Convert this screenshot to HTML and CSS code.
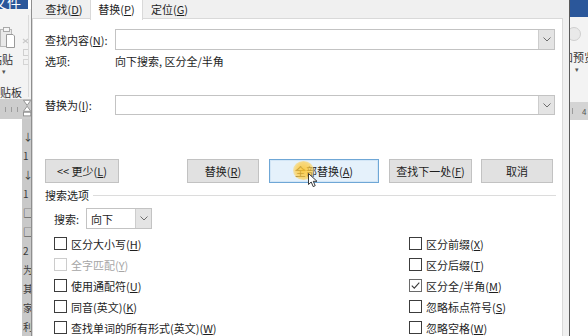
FILE: index.html
```html
<!DOCTYPE html>
<html lang="zh-CN">
<head>
<meta charset="utf-8">
<title>查找和替换</title>
<link rel="stylesheet" href="styles.css">
</head>
<body>
<div class="screen">
  <div class="word-left">
    <div class="wl-title"><span>文件</span></div>
    <div class="wl-ribbon">
      <div class="wl-col">
        <svg class="wl-clip" width="15" height="22" viewBox="0 0 15 22">
          <rect x="0.5" y="3.5" width="11" height="17" fill="#e9e9e9" stroke="#b9b9b9"/>
          <rect x="3.5" y="1.5" width="6" height="4" fill="#f6f6f6" stroke="#a9a9a9"/>
          <path d="M6.5 8.5 H13 L14.5 10 V21.5 H6.5 Z" fill="#fff" stroke="#9a9a9a"/>
        </svg>
        <div class="wl-paste">粘贴</div>
        <div class="wl-caret">▾</div>
        <div class="wl-group">剪贴板</div>
      </div>
      <div class="wl-icons">
        <svg width="7" height="30" viewBox="0 0 7 30">
          <path d="M1 2 L6 6 M6 2 L1 6" stroke="#c9c9c9" stroke-width="1.2"/>
          <rect x="1.5" y="12.5" width="5" height="6" fill="none" stroke="#cfcfcf"/>
          <rect x="1.5" y="22.5" width="5" height="5" fill="none" stroke="#d4d4d4"/>
        </svg>
      </div>
      <div class="wl-sep"></div>
    </div>
    <div class="wl-ruler">
      <span class="tick"></span><span class="tick"></span><span class="tick"></span>
      <svg class="hourglass" width="9" height="20" viewBox="0 0 9 20">
        <path d="M0.5 0.5 H8.5 L4.5 6 Z" fill="#fff" stroke="#8f8f8f"/>
        <path d="M4.5 7 L8.5 12.5 H0.5 Z" fill="#fff" stroke="#8f8f8f"/>
        <rect x="0.5" y="13.5" width="8" height="4" fill="#fff" stroke="#8f8f8f"/>
      </svg>
    </div>
    <div class="wl-doc">
      <div class="wl-page"></div>
      <div class="wl-vstrip">
        <span>↓</span><span>1</span><span>↓</span><span>1</span><span>□</span><span>□</span><span>2</span><span>为</span><span>其</span><span>家</span><span>利</span>
      </div>
    </div>
  </div>

  <div class="dialog">
    <div class="tabs">
      <div class="tab">查找(<u>D</u>)</div>
      <div class="tab active">替换(<u>P</u>)</div>
      <div class="tab">定位(<u>G</u>)</div>
    </div>
    <div class="panel">
      <div class="row find-row">
        <span class="label">查找内容(<u>N</u>):</span>
        <div class="combo wide"><div class="field"></div><div class="drop"><svg width="8" height="5" viewBox="0 0 8 5"><path d="M0.5 0.5 L4 4 L7.5 0.5" fill="none" stroke="#6d6d6d"/></svg></div></div>
      </div>
      <div class="row opt-row">
        <span class="label">选项:</span>
        <span class="value">向下搜索, 区分全/半角</span>
      </div>
      <div class="row repl-row">
        <span class="label">替换为(<u>I</u>):</span>
        <div class="combo wide short"><div class="field"></div><div class="drop"><svg width="8" height="5" viewBox="0 0 8 5"><path d="M0.5 0.5 L4 4 L7.5 0.5" fill="none" stroke="#6d6d6d"/></svg></div></div>
      </div>
      <div class="btn-row">
        <div class="btn b-less">&lt;&lt; 更少(<u>L</u>)</div>
        <div class="btn b-repl">替换(<u>R</u>)</div>
        <div class="btn b-all hot">全部替换(<u>A</u>)
          <span class="halo"></span>
          <svg class="pointer" width="11" height="15" viewBox="0 0 11 15">
            <path d="M0.5 0.5 V11.5 L3.2 9 L5.2 13.6 L7.2 12.7 L5.3 8.3 H9 Z" fill="#fff" stroke="#222" stroke-width="0.9" stroke-linejoin="round"/>
          </svg>
        </div>
        <div class="btn b-next">查找下一处(<u>F</u>)</div>
        <div class="btn b-cancel">取消</div>
      </div>
      <div class="section">
        <span class="sec-title">搜索选项</span>
        <span class="sec-line"></span>
      </div>
      <div class="search-row">
        <span class="s-label">搜索:</span>
        <div class="combo small"><div class="field">向下</div><div class="drop"><svg width="8" height="5" viewBox="0 0 8 5"><path d="M0.5 0.5 L4 4 L7.5 0.5" fill="none" stroke="#6d6d6d"/></svg></div></div>
      </div>
      <div class="checks">
        <div class="chk"><span class="box"></span><span>区分大小写(<u>H</u>)</span></div>
        <div class="chk"><span class="box"></span><span>区分前缀(<u>X</u>)</span></div>
        <div class="chk disabled"><span class="box"></span><span>全字匹配(<u>Y</u>)</span></div>
        <div class="chk"><span class="box"></span><span>区分后缀(<u>T</u>)</span></div>
        <div class="chk"><span class="box"></span><span>使用通配符(<u>U</u>)</span></div>
        <div class="chk"><span class="box checked"><svg width="11" height="11" viewBox="0 0 11 11"><path d="M1.8 5.6 L4.3 8.2 L9.3 2.6" fill="none" stroke="#3a3a3a" stroke-width="1.1"/></svg></span><span>区分全/半角(<u>M</u>)</span></div>
        <div class="chk"><span class="box"></span><span>同音(英文)(<u>K</u>)</span></div>
        <div class="chk"><span class="box"></span><span>忽略标点符号(<u>S</u>)</span></div>
        <div class="chk"><span class="box"></span><span>查找单词的所有形式(英文)(<u>W</u>)</span></div>
        <div class="chk"><span class="box"></span><span>忽略空格(<u>W</u>)</span></div>
      </div>
    </div>
  </div>

  <div class="word-right">
    <div class="wr-title"></div>
    <div class="wr-ribbon">
      <span class="wr-circle"></span>
      <div class="wr-text">和预览</div>
      <div class="wr-caret">▾</div>
    </div>
    <div class="wr-ruler"><span class="tick"></span><span class="num">4</span></div>
    <div class="wr-doc"></div>
  </div>
</div>
</body>
</html>
```

FILE: styles.css
```css
* { box-sizing: border-box; }
html, body { margin: 0; padding: 0; }
body {
  width: 588px;
  height: 336px;
  overflow: hidden;
  background: #ffffff;
  font-family: "Noto Sans CJK SC", "Noto Sans", sans-serif;
  font-size: 11px;
  color: #1e1e1e;
}
u { text-decoration-thickness: 1px; text-underline-offset: 1px; }

.screen { display: flex; width: 588px; height: 336px; }

/* ---------- Word window, left ---------- */
.word-left {
  width: 31px;
  flex: none;
  display: flex;
  flex-direction: column;
  overflow: hidden;
  background: #fff;
}
.wl-title {
  height: 10px;
  width: 28px;
  background: #2b579a;
  overflow: hidden;
}
.wl-title span {
  display: block;
  color: #fff;
  font-size: 14px;
  line-height: 14px;
  margin-top: -5px;
  margin-left: -7px;
  white-space: nowrap;
}
.wl-ribbon {
  height: 90px;
  background: #f3f3f3;
  display: flex;
}
.wl-col {
  width: 22px;
  flex: none;
  display: flex;
  flex-direction: column;
  overflow: hidden;
}
.wl-clip { display: block; margin-top: 17px; margin-left: 0; }
.wl-paste {
  margin-top: 4px;
  margin-left: -9px;
  line-height: 14px;
  white-space: nowrap;
  color: #333;
}
.wl-caret {
  line-height: 10px;
  font-size: 7px;
  margin-left: 2px;
  color: #555;
}
.wl-group {
  margin-top: 9px;
  margin-left: -11px;
  line-height: 14px;
  white-space: nowrap;
  color: #333;
}
.wl-icons { width: 6px; flex: none; padding-top: 28px; overflow: hidden; }
.wl-icons svg { display: block; }
.wl-sep { width: 1px; background: #dadada; margin: 6px 0 2px; }

.wl-ruler {
  height: 20px;
  background: #cdcdcd;
  display: flex;
  align-items: center;
  padding-left: 5px;
  gap: 5px;
}
.wl-ruler .tick { width: 1px; height: 5px; background: #9c9c9c; }
.wl-ruler .hourglass { display: block; margin-left: 0; }

.wl-doc { flex: 1; display: flex; }
.wl-page { width: 22px; background: #fff; }
.wl-vstrip {
  width: 9px;
  background: #c9c9c9;
  display: flex;
  flex-direction: column;
  padding-top: 8px;
  overflow: hidden;
}
.wl-vstrip span {
  line-height: 19px;
  height: 19px;
  font-size: 10px;
  color: #3a3a3a;
  white-space: nowrap;
  padding-left: 1px;
}

/* ---------- Dialog ---------- */
.dialog {
  width: 539px;
  flex: none;
  background: #f0f0f0;
  border-left: 1px solid #8e8e8e;
  border-right: 1px solid #5a5a5a;
  display: flex;
  flex-direction: column;
}
.tabs {
  height: 19px;
  display: flex;
  padding-left: 6px;
  margin-bottom: -1px;
}
.tab {
  width: 52px;
  height: 20px;
  line-height: 19px;
  text-align: center;
  white-space: nowrap;
  color: #1e1e1e;
}
.tab + .tab { width: 53px; }
.tab.active {
  background: #fff;
  border-left: 1px solid #d9d9d9;
  border-right: 1px solid #d9d9d9;
  position: relative;
  z-index: 1;
}
.panel {
  flex: 1;
  margin-right: 6px;
  background: #fff;
  border: 1px solid #d9d9d9;
  border-bottom: none;
  display: flex;
  flex-direction: column;
}
.row {
  display: flex;
  align-items: center;
  padding-left: 12px;
}
.label { width: 70px; flex: none; white-space: nowrap; }
.value { white-space: nowrap; }
.find-row { margin-top: 10px; height: 21px; }
.opt-row { margin-top: 3px; height: 16px; }
.repl-row { margin-top: 26px; height: 20px; }

.combo {
  display: flex;
  border: 1px solid #c3c3c3;
  background: #fff;
}
.combo.wide { width: 440px; height: 21px; }
.combo.wide.short { height: 20px; }
.combo .field {
  flex: 1;
  padding-left: 4px;
  display: flex;
  align-items: center;
  white-space: nowrap;
}
.combo .drop {
  width: 16px;
  flex: none;
  background: #e4e4e4;
  border-left: 1px solid #cdcdcd;
  display: flex;
  align-items: center;
  justify-content: center;
}
.combo .drop svg { display: block; }

.btn-row {
  margin-top: 44px;
  height: 24px;
  display: flex;
  padding-left: 12px;
}
.btn {
  height: 24px;
  background: #e1e1e1;
  border: 1px solid #c2c2c2;
  display: flex;
  align-items: center;
  justify-content: center;
  white-space: nowrap;
  color: #1e1e1e;
}
.b-less { width: 74px; }
.b-repl { width: 72px; margin-left: 68px; }
.b-all { width: 110px; margin-left: 10px; position: relative; }
.b-next { width: 83px; margin-left: 10px; }
.b-cancel { width: 72px; margin-left: 9px; }
.btn.hot {
  background: #e5f1fb;
  border: 1px solid #6fa7d6;
  box-shadow: inset 0 0 0 1px #d3e6f6;
}
.halo {
  position: absolute;
  left: 23px;
  top: 1px;
  width: 21px;
  height: 19px;
  border-radius: 50%;
  background: radial-gradient(circle, rgba(255, 196, 40, 0.85) 0%, rgba(255, 205, 70, 0.7) 55%, rgba(255, 215, 110, 0) 100%);
}
.pointer {
  position: absolute;
  left: 38px;
  top: 13px;
  display: block;
}

.section {
  margin-top: 4px;
  height: 16px;
  display: flex;
  align-items: center;
  padding-left: 12px;
  padding-right: 6px;
}
.sec-title { white-space: nowrap; }
.sec-line { flex: 1; height: 1px; background: #dcdcdc; margin-left: 4px; }

.search-row {
  margin-top: 5px;
  height: 21px;
  display: flex;
  align-items: center;
  padding-left: 21px;
}
.s-label { width: 32px; flex: none; white-space: nowrap; }
.combo.small { width: 66px; height: 21px; }

.checks {
  margin-top: 4px;
  padding-left: 21px;
  display: grid;
  grid-template-columns: 355px 1fr;
  grid-auto-rows: 21px;
}
.chk {
  display: flex;
  align-items: center;
  white-space: nowrap;
}
.chk .box {
  width: 13px;
  height: 13px;
  flex: none;
  border: 1px solid #3c3c3c;
  background: #fff;
  margin-right: 4px;
  display: flex;
  align-items: center;
  justify-content: center;
}
.chk .box.checked { border-color: #6a6a6a; }
.chk .box svg { display: block; }
.chk.disabled { color: #a6a6a6; }
.chk.disabled .box { border-color: #cccccc; }

/* ---------- Word window, right ---------- */
.word-right {
  width: 18px;
  flex: none;
  display: flex;
  flex-direction: column;
  overflow: hidden;
  background: #fff;
}
.wr-title { height: 17px; background: #2b579a; }
.wr-ribbon {
  height: 85px;
  background: #f3f3f3;
  display: flex;
  flex-direction: column;
}
.wr-circle {
  display: block;
  width: 14px;
  height: 14px;
  border-radius: 50%;
  border: 1px solid #cfcfcf;
  background: #e9e9e9;
  margin-top: 10px;
  margin-left: -3px;
}
.wr-text {
  margin-top: 9px;
  margin-left: -8px;
  line-height: 14px;
  white-space: nowrap;
  color: #333;
}
.wr-caret {
  line-height: 10px;
  font-size: 7px;
  margin-left: 5px;
  color: #555;
}
.wr-ruler {
  height: 18px;
  background: #d4d4d4;
  display: flex;
  align-items: center;
  gap: 9px;
  padding-left: 2px;
}
.wr-ruler .tick { width: 1px; height: 6px; background: #9c9c9c; }
.wr-ruler .num { font-size: 8px; color: #555; }
.wr-doc { flex: 1; background: #fff; }
```
